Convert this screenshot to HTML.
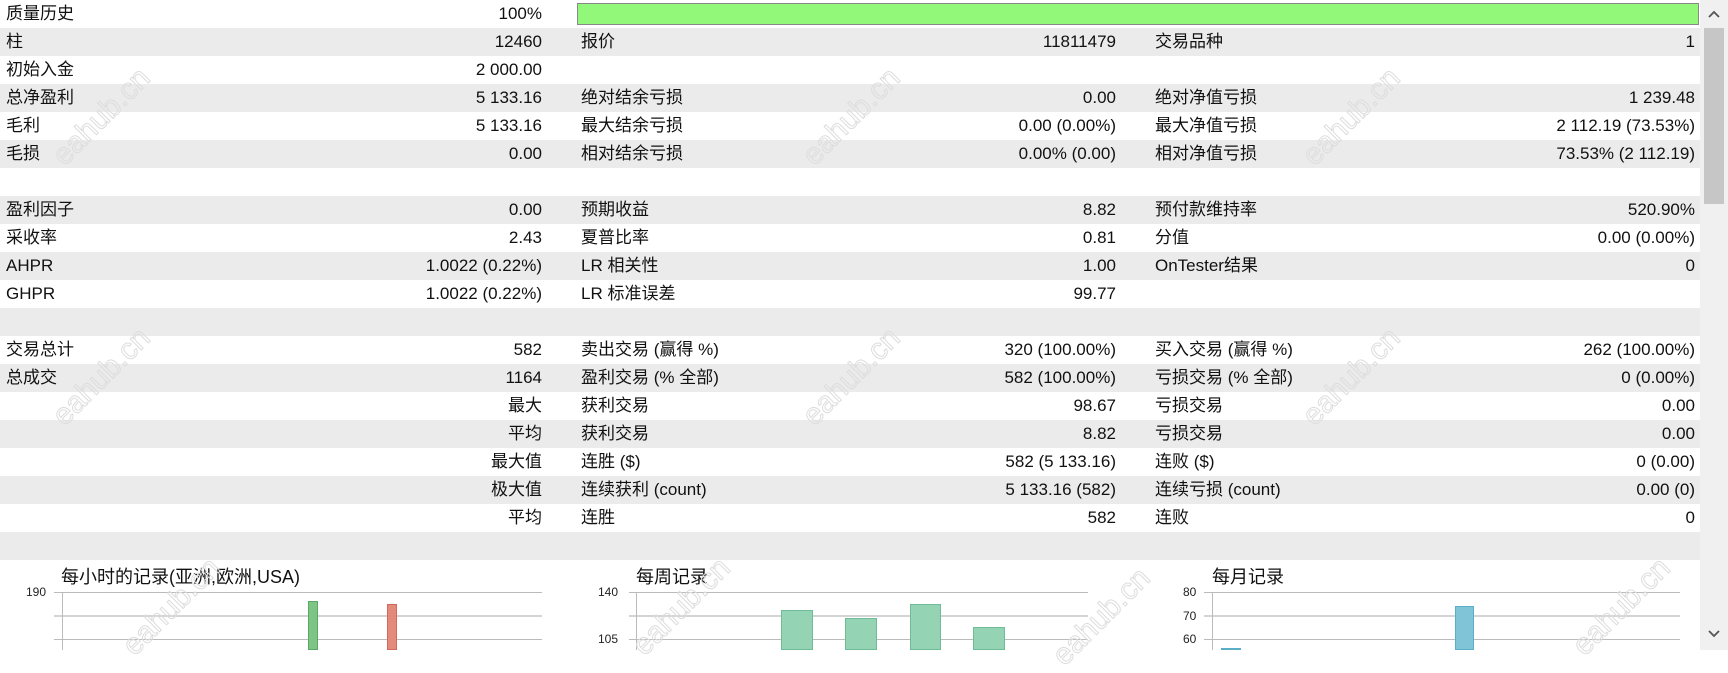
<!DOCTYPE html>
<html><head><meta charset="utf-8"><style>
*{margin:0;padding:0;box-sizing:border-box}
body{width:1728px;height:650px;overflow:hidden;background:#fff;font-family:"Liberation Sans","Noto Sans CJK SC",sans-serif;font-size:17px;color:#111;position:relative}
.row{position:absolute;left:0;width:1700px;height:28px;line-height:28px}
.g{background:#ebebeb}
.t{position:absolute;white-space:nowrap}
.l1{left:6px}.r1{right:1158px}.l2{left:581px}.r2{right:584px}.l3{left:1155px}.r3{right:5px}
.sb{position:absolute;left:1700px;top:0;width:28px;height:650px;background:#f0f0f0}
.wm{position:absolute;font-size:30px;color:transparent;-webkit-text-stroke:1px #ddd;transform:rotate(-45deg);font-family:"Liberation Sans",sans-serif;white-space:nowrap}
.ax{position:absolute;font-size:12px;font-family:"Liberation Sans",sans-serif;color:#222}
.gl{position:absolute;height:1px;background:#bbb}
.ct{position:absolute;font-size:18px;font-family:"Liberation Sans","Noto Sans CJK SC",sans-serif}
</style></head><body>
<div class="row" style="top:0"><span class="t l1">质量历史</span><span class="t r1">100%</span>
<div style="position:absolute;left:577px;top:3px;width:1122px;height:22px;background:#92f87a;border:1px solid #888"></div></div>
<div class="row g" style="top:28px"><span class="t l1">柱</span><span class="t r1">12460</span><span class="t l2">报价</span><span class="t r2">11811479</span><span class="t l3">交易品种</span><span class="t r3">1</span></div>
<div class="row" style="top:56px"><span class="t l1">初始入金</span><span class="t r1">2 000.00</span></div>
<div class="row g" style="top:84px"><span class="t l1">总净盈利</span><span class="t r1">5 133.16</span><span class="t l2">绝对结余亏损</span><span class="t r2">0.00</span><span class="t l3">绝对净值亏损</span><span class="t r3">1 239.48</span></div>
<div class="row" style="top:112px"><span class="t l1">毛利</span><span class="t r1">5 133.16</span><span class="t l2">最大结余亏损</span><span class="t r2">0.00 (0.00%)</span><span class="t l3">最大净值亏损</span><span class="t r3">2 112.19 (73.53%)</span></div>
<div class="row g" style="top:140px"><span class="t l1">毛损</span><span class="t r1">0.00</span><span class="t l2">相对结余亏损</span><span class="t r2">0.00% (0.00)</span><span class="t l3">相对净值亏损</span><span class="t r3">73.53% (2 112.19)</span></div>
<div class="row g" style="top:196px"><span class="t l1">盈利因子</span><span class="t r1">0.00</span><span class="t l2">预期收益</span><span class="t r2">8.82</span><span class="t l3">预付款维持率</span><span class="t r3">520.90%</span></div>
<div class="row" style="top:224px"><span class="t l1">采收率</span><span class="t r1">2.43</span><span class="t l2">夏普比率</span><span class="t r2">0.81</span><span class="t l3">分值</span><span class="t r3">0.00 (0.00%)</span></div>
<div class="row g" style="top:252px"><span class="t l1">AHPR</span><span class="t r1">1.0022 (0.22%)</span><span class="t l2">LR 相关性</span><span class="t r2">1.00</span><span class="t l3">OnTester结果</span><span class="t r3">0</span></div>
<div class="row" style="top:280px"><span class="t l1">GHPR</span><span class="t r1">1.0022 (0.22%)</span><span class="t l2">LR 标准误差</span><span class="t r2">99.77</span></div>
<div class="row g" style="top:308px"></div>
<div class="row" style="top:336px"><span class="t l1">交易总计</span><span class="t r1">582</span><span class="t l2">卖出交易 (赢得 %)</span><span class="t r2">320 (100.00%)</span><span class="t l3">买入交易 (赢得 %)</span><span class="t r3">262 (100.00%)</span></div>
<div class="row g" style="top:364px"><span class="t l1">总成交</span><span class="t r1">1164</span><span class="t l2">盈利交易 (% 全部)</span><span class="t r2">582 (100.00%)</span><span class="t l3">亏损交易 (% 全部)</span><span class="t r3">0 (0.00%)</span></div>
<div class="row" style="top:392px"><span class="t r1">最大</span><span class="t l2">获利交易</span><span class="t r2">98.67</span><span class="t l3">亏损交易</span><span class="t r3">0.00</span></div>
<div class="row g" style="top:420px"><span class="t r1">平均</span><span class="t l2">获利交易</span><span class="t r2">8.82</span><span class="t l3">亏损交易</span><span class="t r3">0.00</span></div>
<div class="row" style="top:448px"><span class="t r1">最大值</span><span class="t l2">连胜 ($)</span><span class="t r2">582 (5 133.16)</span><span class="t l3">连败 ($)</span><span class="t r3">0 (0.00)</span></div>
<div class="row g" style="top:476px"><span class="t r1">极大值</span><span class="t l2">连续获利 (count)</span><span class="t r2">5 133.16 (582)</span><span class="t l3">连续亏损 (count)</span><span class="t r3">0.00 (0)</span></div>
<div class="row" style="top:504px"><span class="t r1">平均</span><span class="t l2">连胜</span><span class="t r2">582</span><span class="t l3">连败</span><span class="t r3">0</span></div>
<div class="row g" style="top:532px"></div>

<div class="ct" style="left:61px;top:563px">每小时的记录(亚洲,欧洲,USA)</div>
<div class="ax" style="left:26px;top:585px">190</div>
<div class="gl" style="left:54px;top:592px;width:488px"></div>
<div class="gl" style="left:54px;top:615px;width:488px;background:#d4d4d4;height:2px"></div>
<div class="gl" style="left:54px;top:639px;width:488px"></div>
<div style="position:absolute;left:62px;top:592px;width:1px;height:58px;background:#bbb"></div>
<div style="position:absolute;left:308px;top:601px;width:10px;height:49px;background:#7fc487;border:1px solid #5aa866"></div>
<div style="position:absolute;left:387px;top:604px;width:10px;height:46px;background:#e38a7a;border:1px solid #d06a5a"></div>

<div class="ct" style="left:636px;top:563px">每周记录</div>
<div class="ax" style="left:598px;top:585px">140</div>
<div class="ax" style="left:598px;top:632px">105</div>
<div class="gl" style="left:629px;top:592px;width:459px"></div>
<div class="gl" style="left:629px;top:615px;width:459px;background:#d4d4d4;height:2px"></div>
<div class="gl" style="left:629px;top:639px;width:459px"></div>
<div style="position:absolute;left:636px;top:592px;width:1px;height:58px;background:#bbb"></div>
<div style="position:absolute;left:781px;top:610px;width:32px;height:40px;background:#95d3b5;border:1px solid #70bb98"></div>
<div style="position:absolute;left:845px;top:618px;width:32px;height:32px;background:#95d3b5;border:1px solid #70bb98"></div>
<div style="position:absolute;left:910px;top:604px;width:31px;height:46px;background:#95d3b5;border:1px solid #70bb98"></div>
<div style="position:absolute;left:973px;top:627px;width:32px;height:23px;background:#95d3b5;border:1px solid #70bb98"></div>

<div class="ct" style="left:1212px;top:563px">每月记录</div>
<div class="ax" style="left:1183px;top:585px">80</div>
<div class="ax" style="left:1183px;top:609px">70</div>
<div class="ax" style="left:1183px;top:632px">60</div>
<div class="gl" style="left:1204px;top:592px;width:476px"></div>
<div class="gl" style="left:1204px;top:615px;width:476px;background:#d4d4d4;height:2px"></div>
<div class="gl" style="left:1204px;top:639px;width:476px"></div>
<div style="position:absolute;left:1212px;top:592px;width:1px;height:58px;background:#bbb"></div>
<div style="position:absolute;left:1455px;top:606px;width:19px;height:44px;background:#80c4d8;border:1px solid #5aaec8"></div>
<div style="position:absolute;left:1221px;top:648px;width:20px;height:2px;background:#80c4d8;border:1px solid #5aaec8"></div>

<div class="wm" style="left:40px;top:100px">eahub.cn</div>
<div class="wm" style="left:790px;top:100px">eahub.cn</div>
<div class="wm" style="left:1290px;top:100px">eahub.cn</div>
<div class="wm" style="left:40px;top:360px">eahub.cn</div>
<div class="wm" style="left:790px;top:360px">eahub.cn</div>
<div class="wm" style="left:1290px;top:360px">eahub.cn</div>
<div class="wm" style="left:110px;top:590px">eahub.cn</div>
<div class="wm" style="left:620px;top:590px">eahub.cn</div>
<div class="wm" style="left:1040px;top:600px">eahub.cn</div>
<div class="wm" style="left:1560px;top:590px">eahub.cn</div>

<div class="sb">
<svg style="position:absolute;left:8px;top:10px" width="12" height="8"><path d="M1 7 L6 2 L11 7" stroke="#555" stroke-width="1.8" fill="none"/></svg>
<div style="position:absolute;left:4px;top:28px;width:20px;height:176px;background:#c6c6c6"></div>
<svg style="position:absolute;left:8px;top:630px" width="12" height="8"><path d="M1 1 L6 6 L11 1" stroke="#555" stroke-width="1.8" fill="none"/></svg>
</div>
</body></html>
